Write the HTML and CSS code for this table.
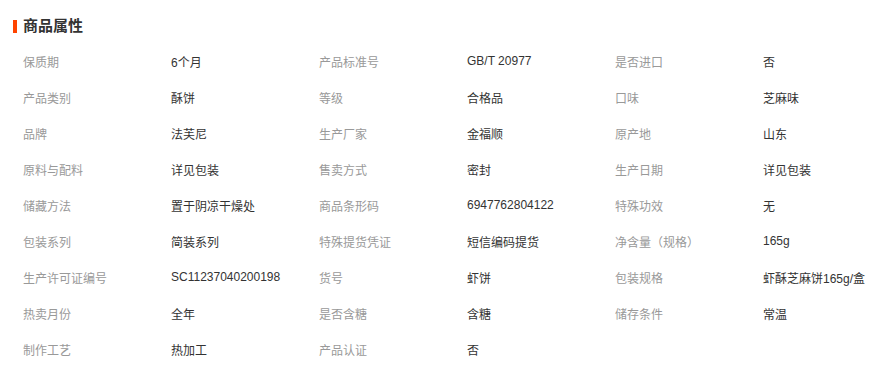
FILE: index.html
```html
<!DOCTYPE html>
<html lang="zh-CN">
<head>
<meta charset="utf-8">
<title>商品属性</title>
<link rel="stylesheet" href="styles.css">
</head>
<body>
<div class="attrs">
  <h2 class="title"><span class="bar"></span>商品属性</h2>
  <div class="grid">
    <span class="k">保质期</span><span class="v">6个月</span>
    <span class="k">产品标准号</span><span class="v">GB/T 20977</span>
    <span class="k">是否进口</span><span class="v">否</span>

    <span class="k">产品类别</span><span class="v">酥饼</span>
    <span class="k">等级</span><span class="v">合格品</span>
    <span class="k">口味</span><span class="v">芝麻味</span>

    <span class="k">品牌</span><span class="v">法芙尼</span>
    <span class="k">生产厂家</span><span class="v">金福顺</span>
    <span class="k">原产地</span><span class="v">山东</span>

    <span class="k">原料与配料</span><span class="v">详见包装</span>
    <span class="k">售卖方式</span><span class="v">密封</span>
    <span class="k">生产日期</span><span class="v">详见包装</span>

    <span class="k">储藏方法</span><span class="v">置于阴凉干燥处</span>
    <span class="k">商品条形码</span><span class="v">6947762804122</span>
    <span class="k">特殊功效</span><span class="v">无</span>

    <span class="k">包装系列</span><span class="v">简装系列</span>
    <span class="k">特殊提货凭证</span><span class="v">短信编码提货</span>
    <span class="k">净含量（规格）</span><span class="v">165g</span>

    <span class="k">生产许可证编号</span><span class="v">SC11237040200198</span>
    <span class="k">货号</span><span class="v">虾饼</span>
    <span class="k">包装规格</span><span class="v">虾酥芝麻饼165g/盒</span>

    <span class="k">热卖月份</span><span class="v">全年</span>
    <span class="k">是否含糖</span><span class="v">含糖</span>
    <span class="k">储存条件</span><span class="v">常温</span>

    <span class="k">制作工艺</span><span class="v">热加工</span>
    <span class="k">产品认证</span><span class="v">否</span>
    <span class="k"></span><span class="v"></span>
  </div>
</div>
</body>
</html>
```

FILE: styles.css
```css
html, body {
  margin: 0;
  padding: 0;
  background: #fff;
}
body {
  font-family: "Liberation Sans", "Noto Sans CJK SC", sans-serif;
  font-size: 12px;
  color: #333;
}
.attrs {
  padding: 17px 0 0 13px;
}
.title {
  display: flex;
  align-items: center;
  gap: 6px;
  margin: 0 0 8px 0;
  height: 18px;
  line-height: 18px;
  font-size: 15px;
  font-weight: bold;
  color: #333;
}
.bar {
  display: block;
  width: 4px;
  height: 13px;
  background: #ff4400;
}
.grid {
  display: grid;
  grid-template-columns: repeat(6, 148px);
  grid-auto-rows: 36px;
  padding-left: 10px;
}
.k, .v {
  display: flex;
  align-items: center;
  white-space: nowrap;
}
.k {
  color: #999;
}
.v {
  color: #333;
}
```
